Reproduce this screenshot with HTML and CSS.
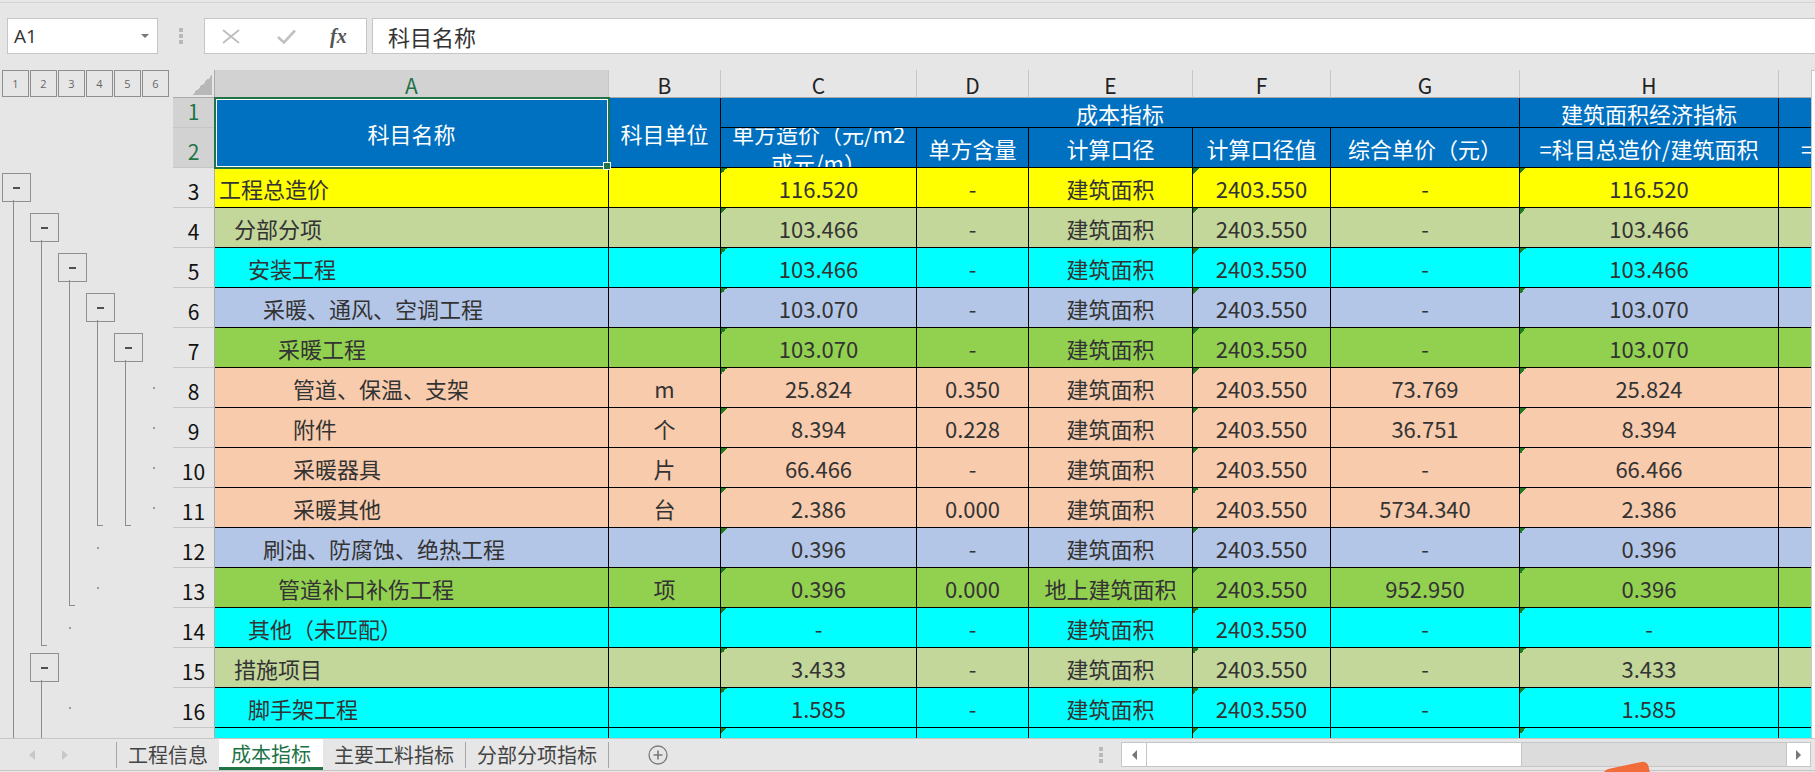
FILE: index.html
```html
<!DOCTYPE html>
<html lang="zh-CN">
<head>
<meta charset="utf-8">
<title>成本指标</title>
<link rel="stylesheet" href="styles.css">
</head>
<body>
<div class="app">
  <div class="topline"></div>
  <div class="fbar">
    <div class="namebox"><span>A1</span><span class="nb-arrow"></span></div>
    <div class="grip"><i></i><i></i><i></i></div>
    <div class="fxbox">
      <svg class="ic-x" width="18" height="15" viewBox="0 0 18 15"><path d="M1 1L17 14M17 1L1 14" stroke="#bdbdbd" stroke-width="1.7" fill="none"/></svg>
      <svg class="ic-ok" width="19" height="15" viewBox="0 0 19 15"><path d="M1 8L7 13.5L18 1.5" stroke="#c2c2c2" stroke-width="2.6" fill="none"/></svg>
      <span class="fx">fx</span>
    </div>
    <div class="finput">科目名称</div>
  </div>
  <div class="main">
    <div class="outline">
      <div class="levels"><span>1</span><span>2</span><span>3</span><span>4</span><span>5</span><span>6</span></div>
      <div class="ol-grid">
        <i class="b"></i><i></i><i></i><i></i><i></i><i></i>
        <i class="l"></i><i class="b"></i><i></i><i></i><i></i><i></i>
        <i class="l"></i><i class="l"></i><i class="b"></i><i></i><i></i><i></i>
        <i class="l"></i><i class="l"></i><i class="l"></i><i class="b"></i><i></i><i></i>
        <i class="l"></i><i class="l"></i><i class="l"></i><i class="l"></i><i class="b"></i><i></i>
        <i class="l"></i><i class="l"></i><i class="l"></i><i class="l"></i><i class="l"></i><i class="d"></i>
        <i class="l"></i><i class="l"></i><i class="l"></i><i class="l"></i><i class="l"></i><i class="d"></i>
        <i class="l"></i><i class="l"></i><i class="l"></i><i class="l"></i><i class="l"></i><i class="d"></i>
        <i class="l"></i><i class="l"></i><i class="l"></i><i class="e"></i><i class="e"></i><i class="d"></i>
        <i class="l"></i><i class="l"></i><i class="l"></i><i class="d"></i><i></i><i></i>
        <i class="l"></i><i class="l"></i><i class="e"></i><i class="d"></i><i></i><i></i>
        <i class="l"></i><i class="e"></i><i class="d"></i><i></i><i></i><i></i>
        <i class="l"></i><i class="b"></i><i></i><i></i><i></i><i></i>
        <i class="l"></i><i class="l"></i><i class="d"></i><i></i><i></i><i></i>
        <i class="l"></i><i class="l"></i><i class="d"></i><i></i><i></i><i></i>
      </div>
    </div>
    <div class="sheet-wrap">
      <div class="sheet">
        <div class="ch corner"></div>
        <div class="ch sel">A</div>
        <div class="ch">B</div>
        <div class="ch">C</div>
        <div class="ch">D</div>
        <div class="ch">E</div>
        <div class="ch">F</div>
        <div class="ch">G</div>
        <div class="ch">H</div>
        <div class="ch"></div>

        <div class="rh sel">1</div>
        <div class="hd rs">科目名称</div>
        <div class="hd rs">科目单位</div>
        <div class="hd cs">成本指标</div>
        <div class="hd">建筑面积经济指标</div>
        <div class="hd"></div>
        <div class="rh sel">2</div>
        <div class="hd wrap"><span>单方造价（元/m2<br>或元/m）</span></div>
        <div class="hd">单方含量</div>
        <div class="hd">计算口径</div>
        <div class="hd">计算口径值</div>
        <div class="hd">综合单价（元）</div>
        <div class="hd">=科目总造价/建筑面积</div>
        <div class="hd il">=科目总造价/计算口径值</div>

        <div class="row yel"><div class="rh">3</div><div class="c a l0">工程总造价</div><div class="c"></div><div class="c t">116.520</div><div class="c">-</div><div class="c">建筑面积</div><div class="c t">2403.550</div><div class="c">-</div><div class="c t">116.520</div><div class="c"></div></div>
        <div class="row olv"><div class="rh">4</div><div class="c a l1">分部分项</div><div class="c"></div><div class="c t">103.466</div><div class="c">-</div><div class="c">建筑面积</div><div class="c t">2403.550</div><div class="c">-</div><div class="c t">103.466</div><div class="c"></div></div>
        <div class="row cyn"><div class="rh">5</div><div class="c a l2">安装工程</div><div class="c"></div><div class="c t">103.466</div><div class="c">-</div><div class="c">建筑面积</div><div class="c t">2403.550</div><div class="c">-</div><div class="c t">103.466</div><div class="c"></div></div>
        <div class="row lbl"><div class="rh">6</div><div class="c a l3">采暖、通风、空调工程</div><div class="c"></div><div class="c t">103.070</div><div class="c">-</div><div class="c">建筑面积</div><div class="c t">2403.550</div><div class="c">-</div><div class="c t">103.070</div><div class="c"></div></div>
        <div class="row grn"><div class="rh">7</div><div class="c a l4">采暖工程</div><div class="c"></div><div class="c t">103.070</div><div class="c">-</div><div class="c">建筑面积</div><div class="c t">2403.550</div><div class="c">-</div><div class="c t">103.070</div><div class="c"></div></div>
        <div class="row pch"><div class="rh">8</div><div class="c a l5">管道、保温、支架</div><div class="c">m</div><div class="c t">25.824</div><div class="c">0.350</div><div class="c">建筑面积</div><div class="c t">2403.550</div><div class="c">73.769</div><div class="c t">25.824</div><div class="c"></div></div>
        <div class="row pch"><div class="rh">9</div><div class="c a l5">附件</div><div class="c">个</div><div class="c t">8.394</div><div class="c">0.228</div><div class="c">建筑面积</div><div class="c t">2403.550</div><div class="c">36.751</div><div class="c t">8.394</div><div class="c"></div></div>
        <div class="row pch"><div class="rh">10</div><div class="c a l5">采暖器具</div><div class="c">片</div><div class="c t">66.466</div><div class="c">-</div><div class="c">建筑面积</div><div class="c t">2403.550</div><div class="c">-</div><div class="c t">66.466</div><div class="c"></div></div>
        <div class="row pch"><div class="rh">11</div><div class="c a l5">采暖其他</div><div class="c">台</div><div class="c t">2.386</div><div class="c">0.000</div><div class="c">建筑面积</div><div class="c t">2403.550</div><div class="c">5734.340</div><div class="c t">2.386</div><div class="c"></div></div>
        <div class="row lbl"><div class="rh">12</div><div class="c a l3">刷油、防腐蚀、绝热工程</div><div class="c"></div><div class="c t">0.396</div><div class="c">-</div><div class="c">建筑面积</div><div class="c t">2403.550</div><div class="c">-</div><div class="c t">0.396</div><div class="c"></div></div>
        <div class="row grn"><div class="rh">13</div><div class="c a l4">管道补口补伤工程</div><div class="c">项</div><div class="c t">0.396</div><div class="c">0.000</div><div class="c">地上建筑面积</div><div class="c t">2403.550</div><div class="c">952.950</div><div class="c t">0.396</div><div class="c"></div></div>
        <div class="row cyn"><div class="rh">14</div><div class="c a l2">其他（未匹配）</div><div class="c"></div><div class="c t">-</div><div class="c">-</div><div class="c">建筑面积</div><div class="c t">2403.550</div><div class="c">-</div><div class="c t">-</div><div class="c"></div></div>
        <div class="row olv"><div class="rh">15</div><div class="c a l1">措施项目</div><div class="c"></div><div class="c t">3.433</div><div class="c">-</div><div class="c">建筑面积</div><div class="c t">2403.550</div><div class="c">-</div><div class="c t">3.433</div><div class="c"></div></div>
        <div class="row cyn"><div class="rh">16</div><div class="c a l2">脚手架工程</div><div class="c"></div><div class="c t">1.585</div><div class="c">-</div><div class="c">建筑面积</div><div class="c t">2403.550</div><div class="c">-</div><div class="c t">1.585</div><div class="c"></div></div>
        <div class="row cyn"><div class="rh"></div><div class="c a l2"></div><div class="c"></div><div class="c t"></div><div class="c"></div><div class="c"></div><div class="c t"></div><div class="c"></div><div class="c t"></div><div class="c"></div></div>

        <div class="selection"><span class="handle"></span></div>
      </div>
    </div>
    <div class="vscroll"></div>
  </div>
  <div class="tabbar">
    <div class="nav"><span class="pv"></span><span class="nx"></span></div>
    <span class="tsep"></span>
    <div class="tab">工程信息</div>
    <div class="tab on">成本指标</div>
    <div class="tab">主要工料指标</div>
    <span class="tsep"></span>
    <div class="tab">分部分项指标</div>
    <span class="tsep"></span>
    <div class="addsheet"><svg width="20" height="20" viewBox="0 0 20 20"><circle cx="10" cy="10" r="9" stroke="#7a7a7a" stroke-width="1.3" fill="none"/><path d="M10 5.5V14.5M5.5 10H14.5" stroke="#7a7a7a" stroke-width="1.6"/></svg></div>
    <div class="hgrip"><i></i><i></i><i></i></div>
    <div class="hscroll">
      <div class="hbtn"><span class="al"></span></div>
      <div class="hthumb"></div>
      <div class="hfill"></div>
      <div class="hbtn r"><span class="ar"></span></div>
    </div>
  </div>
</div>
<div class="badge"></div>
</body>
</html>
```

FILE: styles.css
```css
*{box-sizing:border-box;margin:0;padding:0}
html,body{width:1815px;height:772px;overflow:hidden}
body{background:#e6e6e6;font-family:"Noto Sans CJK SC","Noto Sans",sans-serif;color:#333;position:relative}
.app{display:flex;flex-direction:column;height:772px}

.topline{flex:none;height:3px;border-bottom:1px solid #d4d4d4}
.fbar{flex:none;display:flex;height:36px;margin-top:15px;padding-left:7px}
.namebox{width:151px;flex:none;background:#fff;border:1px solid #c6c6c6;display:flex;align-items:center;justify-content:space-between;padding:0 8px 0 6px;font-family:"Open Sans",sans-serif;font-size:19px;color:#333}
.nb-arrow{width:0;height:0;border-left:4px solid transparent;border-right:4px solid transparent;border-top:4px solid #777}
.grip{width:46px;flex:none;display:flex;flex-direction:column;align-items:center;justify-content:center;gap:2px}
.grip i,.hgrip i{display:block;width:4px;height:4px;background:#b9b9b9}
.fxbox{width:163px;flex:none;background:#fff;border:1px solid #c6c6c6;display:flex;align-items:center;padding-left:17px}
.ic-x,.ic-ok{display:block;flex:none}
.ic-ok{margin-left:37px}
.fx{margin-left:34px;font-family:"Liberation Serif",serif;font-style:italic;font-weight:bold;font-size:20px;color:#555}
.finput{flex:1;margin-left:5px;background:#fff;border:1px solid #c6c6c6;border-right:0;display:flex;align-items:center;padding-left:15px;font-size:22px;color:#333}

.main{flex:none;display:flex;height:668px;margin-top:16px;overflow:hidden}
.outline{flex:none;width:173px}
.levels{display:flex;height:28px;padding-left:2px;gap:1px}
.levels span{width:27px;height:27px;border:1px solid #8f8f8f;display:flex;align-items:center;justify-content:center;font-family:"Open Sans",sans-serif;font-size:11px;color:#666}
.ol-grid{display:grid;grid-template-columns:repeat(6,28px);grid-auto-rows:40px;margin-top:70px}
.ol-grid i{display:block}
.ol-grid .b{background:linear-gradient(#8c8c8c,#8c8c8c) 13px 32px/1px 8px no-repeat}
.ol-grid .b::before{content:"";display:block;width:27px;height:27px;margin:5px 0 0 2px;border:1px solid #8f8f8f;background:linear-gradient(#505050,#505050) center/7px 2px no-repeat}
.ol-grid .l{background:linear-gradient(#8c8c8c,#8c8c8c) 13px 0/1px 100% no-repeat}
.ol-grid .e{background:linear-gradient(#8c8c8c,#8c8c8c) 13px 0/1px 38px no-repeat,linear-gradient(#8c8c8c,#8c8c8c) 13px 37px/6px 1px no-repeat}
.ol-grid .d{background:linear-gradient(#9a9a9a,#9a9a9a) 13px 19px/2px 2px no-repeat}

.sheet-wrap{flex:none;width:1638px;overflow:hidden}
.sheet{position:relative;display:grid;width:1886px;grid-template-columns:42px 394px 112px 196px 112px 164px 138px 189px 259px 280px;grid-template-rows:28px 30px 40px;grid-auto-rows:40px}
.ch{display:flex;align-items:center;justify-content:center;padding-top:3px;border-right:1px solid #c6c6c6;border-bottom:1px solid #ababab;font-size:21px;color:#222}
.ch.sel{background:#d2d2d2;color:#217346}
.ch.corner{border-right-color:#ababab;background:linear-gradient(to bottom right,transparent 50%,#b8b8b8 50%) right 2px bottom 2px/20px 20px no-repeat}
.rh{display:flex;align-items:flex-end;justify-content:center;padding-bottom:5px;border-right:1px solid #ababab;border-bottom:1px solid #c6c6c6;font-size:21px;line-height:1;color:#111}
.rh.sel{background:#d2d2d2;color:#217346}
.hd{display:flex;align-items:center;justify-content:center;text-align:center;overflow:hidden;white-space:nowrap;background:#0070c0;color:#fff;font-size:22px;border-right:1px solid #000;border-bottom:1px solid #000}
.hd.rs{grid-row:span 2}
.hd.cs{grid-column:span 5}
.hd.wrap{line-height:29px;white-space:normal}
.hd.il{justify-content:flex-start;padding-left:22px}
.row{display:contents}
.c{display:flex;align-items:center;justify-content:center;overflow:hidden;white-space:nowrap;font-size:22px;color:#333;border-right:1px solid #000;border-bottom:1px solid #000}
.c.a{justify-content:flex-start}
.l0{padding-left:4px}
.l1{padding-left:19px}
.l2{padding-left:33px}
.l3{padding-left:48px}
.l4{padding-left:63px}
.l5{padding-left:78px}
.c.t{background-image:linear-gradient(135deg,#1e7b1e 50%,transparent 50%);background-size:6px 6px;background-repeat:no-repeat}
.yel>.c{background-color:#ffff00}
.olv>.c{background-color:#c4d79b}
.cyn>.c{background-color:#00ffff}
.lbl>.c{background-color:#b4c6e7}
.grn>.c{background-color:#92d050}
.pch>.c{background-color:#f8cbad}
.selection{position:absolute;left:41px;top:27px;width:396px;height:72px;border:2px solid #217346;box-shadow:inset 0 0 0 1px #fff;pointer-events:none}
.handle{position:absolute;right:-3px;bottom:-3px;width:8px;height:8px;background:#217346;border:1px solid #fff}
.vscroll{flex:1;background:#fff;border-left:1px solid #c6c6c6;border-top:1px solid #c6c6c6}

.tabbar{flex:none;height:33px;display:flex;align-items:stretch;border-top:1px solid #c6c6c6;border-bottom:1px solid #c6c6c6;padding-right:4px}
.nav{flex:none;width:116px;display:flex;align-items:center;padding-left:29px}
.nav .pv{border-right:6px solid #c8c8c8;border-top:5px solid transparent;border-bottom:5px solid transparent}
.nav .nx{margin-left:27px;border-left:6px solid #c8c8c8;border-top:5px solid transparent;border-bottom:5px solid transparent}
.tsep{flex:none;width:1px;background:#a6a6a6;margin:3px 0 2px}
.tab{flex:none;display:flex;align-items:center;padding:0 11px;font-size:20px;color:#444}
.tab.on{background:#fff;color:#217346;padding:0 12px;border-bottom:3px solid #217346}
.addsheet{flex:none;margin-left:39px;display:flex;align-items:center}
.hgrip{margin-left:auto;width:20px;flex:none;display:flex;flex-direction:column;align-items:center;justify-content:center;gap:2px}
.hscroll{flex:none;margin-left:10px;width:690px;height:25px;align-self:center;display:flex;border:1px solid #c6c6c6;background:#dcdcdc}
.hbtn{flex:none;width:24px;background:#fff;display:flex;align-items:center;justify-content:center}
.hbtn.r{border-left:1px solid #c6c6c6}
.hthumb{flex:none;width:376px;background:#fff;border-left:1px solid #c6c6c6;border-right:1px solid #c6c6c6}
.hfill{flex:1}
.al{border-right:5px solid #777;border-top:5px solid transparent;border-bottom:5px solid transparent}
.ar{border-left:5px solid #777;border-top:5px solid transparent;border-bottom:5px solid transparent}
.badge{position:absolute;left:1606px;top:765px;width:46px;height:40px;background:#f26b3a;border-radius:6px;transform:rotate(-12deg)}
```
